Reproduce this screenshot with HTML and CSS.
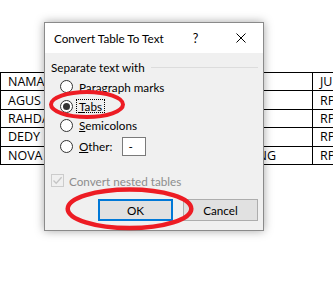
FILE: index.html
```html
<!DOCTYPE html>
<html lang="id">
<head>
    <meta charset="UTF-8">
    <meta name="viewport" content="width=device-width, initial-scale=1.0">
    <title>Convert Table To Text</title>
    <link rel="stylesheet" href="styles.css">
</head>
<body>
    <table class="sheet">
        <colgroup>
            <col class="c-name">
            <col class="c-addr">
            <col class="c-pay">
        </colgroup>
        <tr><td>NAMA</td><td></td><td>JUMLAH</td></tr>
        <tr><td>AGUS</td><td></td><td>RP 50.000</td></tr>
        <tr><td>RAHDAN</td><td></td><td>RP 75.000</td></tr>
        <tr><td>DEDY</td><td></td><td>RP 60.000</td></tr>
        <tr><td>NOVA</td><td>BANDUNG</td><td>RP 80.000</td></tr>
    </table>

    <div class="dialog">
        <div class="titlebar">
            <span class="title">Convert Table To Text</span>
            <span class="cap-btn">?</span>
            <span class="cap-btn">
                <svg width="10" height="10" viewBox="0 0 10 10"><path d="M0.5 0.5 L9.5 9.5 M9.5 0.5 L0.5 9.5" stroke="#000" stroke-width="1" fill="none"/></svg>
            </span>
        </div>
        <div class="content">
            <div class="group-head">
                <span>Separate text with</span>
                <span class="rule"></span>
            </div>
            <div class="options">
                <div class="opt"><span class="radio"></span><span class="lbl"><u>P</u>aragraph marks</span></div>
                <div class="opt"><span class="radio on"></span><span class="lbl focus"><u>T</u>abs</span></div>
                <div class="opt"><span class="radio"></span><span class="lbl"><u>S</u>emicolons</span></div>
                <div class="opt other"><span class="radio"></span><span class="lbl"><u>O</u>ther:</span><span class="field">-</span></div>
            </div>
            <div class="check">
                <span class="box">
                    <svg width="11" height="11" viewBox="0 0 11 11"><path d="M1.5 5.5 L4.2 8.3 L9.6 2.2" stroke="#c4c4c4" stroke-width="1.3" fill="none"/></svg>
                </span>
                <span>Convert nested tables</span>
            </div>
            <div class="buttons">
                <span class="btn default">OK</span>
                <span class="btn">Cancel</span>
            </div>
        </div>
    </div>

    <svg class="marks" width="333" height="282" viewBox="0 0 333 282">
        <ellipse cx="87" cy="104.5" rx="36" ry="12.5" fill="none" stroke="#ed1c24" stroke-width="4"/>
        <ellipse cx="129.5" cy="208.7" rx="61.8" ry="19.3" fill="none" stroke="#ed1c24" stroke-width="4.5"/>
    </svg>
</body>
</html>
```

FILE: styles.css
```css
html, body {
    margin: 0;
    overflow: hidden;
}
body {
    position: relative;
    width: 333px;
    height: 282px;
    background-color: #fff;
    font-family: "Open Sans", sans-serif;
}

/* document table behind the dialog */
.sheet {
    margin-top: 72px;
    border-collapse: collapse;
    table-layout: fixed;
    width: 372px;
    font-size: 12.5px;
    color: #000;
}
.c-name { width: 206px; }
.c-addr { width: 106px; }
.c-pay { width: 60px; }
.sheet td {
    border: 1px solid #000;
    height: 17.4px;
    padding: 0 7px;
    white-space: nowrap;
    overflow: hidden;
    line-height: 17px;
}

/* dialog */
.dialog {
    position: absolute;
    left: 44px;
    top: 22px;
    width: 218px;
    height: 207px;
    border: 1px solid #8a8a8a;
    background-color: #f0f0f0;
    box-shadow: 0 0 9px rgba(0, 0, 0, 0.35);
    font-family: Lato, "Noto Sans", sans-serif;
    font-size: 11.7px;
    color: #000;
}
.titlebar {
    display: flex;
    align-items: center;
    height: 30px;
    background-color: #fff;
}
.title {
    flex: 1;
    padding-left: 9px;
    white-space: nowrap;
}
.cap-btn {
    width: 45px;
    height: 30px;
    display: flex;
    align-items: center;
    justify-content: center;
    font-size: 12.5px;
}
.content {
    padding: 6px 5px 0 6px;
}
.group-head {
    display: flex;
    align-items: center;
    height: 16px;
}
.rule {
    flex: 1;
    height: 1px;
    margin-left: 6px;
    background-color: #dcdcdc;
}
.options {
    margin-top: 2px;
    padding-left: 9px;
}
.opt {
    display: flex;
    align-items: center;
    height: 19.4px;
    white-space: nowrap;
}
.opt.other {
    height: 21px;
    margin-top: 0.5px;
}
.radio {
    box-sizing: border-box;
    width: 13px;
    height: 13px;
    border: 1px solid #333;
    border-radius: 50%;
    background-color: #fff;
    display: flex;
    align-items: center;
    justify-content: center;
}
.radio.on::after {
    content: "";
    width: 7px;
    height: 7px;
    border-radius: 50%;
    background-color: #333;
}
.lbl {
    margin-left: 3px;
    padding: 0 2px;
    border: 1px solid transparent;
    line-height: 12px;
}
.lbl.focus {
    border: 1px dotted #000;
}
.field {
    box-sizing: border-box;
    width: 24px;
    height: 19px;
    margin-left: 7px;
    padding-left: 5px;
    border: 1px solid #7a7a7a;
    background-color: #fff;
    line-height: 17px;
}
.check {
    display: flex;
    align-items: center;
    height: 16px;
    margin-top: 16px;
    color: #8d8d8d;
    white-space: nowrap;
}
.box {
    box-sizing: border-box;
    width: 13px;
    height: 13px;
    margin-right: 5px;
    border: 1px solid #cccccc;
    display: flex;
    align-items: center;
    justify-content: center;
}
.buttons {
    display: flex;
    justify-content: flex-end;
    gap: 10px;
    margin-top: 10px;
}
.btn {
    box-sizing: border-box;
    width: 75px;
    height: 22px;
    border: 1px solid #adadad;
    background-color: #e1e1e1;
    display: flex;
    align-items: center;
    justify-content: center;
}
.btn.default {
    border: 2px solid #0078d7;
}

/* red annotation marks */
.marks {
    position: absolute;
    left: 0;
    top: 0;
    pointer-events: none;
}
```
